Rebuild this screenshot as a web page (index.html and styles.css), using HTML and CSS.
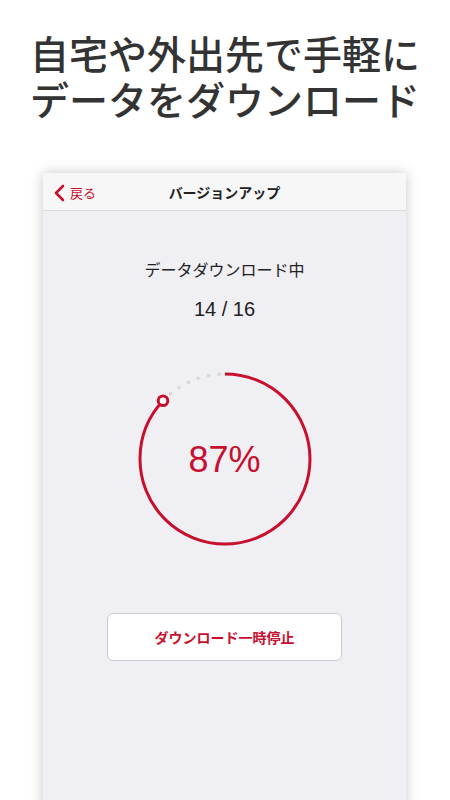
FILE: index.html
```html
<!DOCTYPE html>
<html>
  <head>
    <meta name="viewport" content="width=device-width, initial-scale=1">
    <link rel="stylesheet" href="styles.css">
  </head>
  <body>
    <h1 class="headline">自宅や外出先で手軽に<br>データをダウンロード</h1>

    <div class="phone">
      <div class="navbar">
        <a class="back">
          <svg width="13" height="18" viewBox="0 0 13 18"><polyline points="10,2 3,9 10,16" fill="none" stroke="#c8102e" stroke-width="2.6" stroke-linecap="round" stroke-linejoin="round"/></svg>
          <span>戻る</span>
        </a>
        <div class="title">バージョンアップ</div>
      </div>

      <div class="content">
        <p class="status">データダウンロード中</p>
        <p class="count">14 / 16</p>

        <div class="progress">
          <svg width="200" height="200" viewBox="0 0 200 200">
            <!-- remaining part -->
            <g fill="#d9d9dd">
              <circle cx="45.4" cy="34.9" r="1.9"/>
              <circle cx="54.0" cy="28.6" r="1.9"/>
              <circle cx="63.3" cy="23.3" r="1.9"/>
              <circle cx="73.2" cy="19.3" r="1.9"/>
              <circle cx="83.5" cy="16.6" r="1.9"/>
              <circle cx="94.1" cy="15.2" r="1.9"/>
            </g>
            <!-- 87% done -->
            <circle cx="100" cy="100" r="85" fill="none" stroke="#c8102e" stroke-width="3" stroke-dasharray="464.6 600" transform="rotate(-90 100 100)"/>
            <circle cx="38.0" cy="41.8" r="4.8" fill="#fff" stroke="#c8102e" stroke-width="3"/>
          </svg>
          <div class="percent">87%</div>
        </div>

        <button class="pause">ダウンロード一時停止</button>
      </div>
    </div>
  </body>
</html>
```

FILE: styles.css
```css
body {
  margin: 0;
  background: #fff;
  font-family: "Liberation Sans", "Noto Sans CJK JP", sans-serif;
  overflow: hidden;
}

.headline {
  margin: 0;
  padding-top: 29px;
  font-family: "Noto Sans CJK JP", sans-serif;
  font-weight: 500;
  font-size: 39px;
  line-height: 46px;
  color: #333;
  text-align: center;
}

.phone {
  margin: 52px 0 0 43px;
  width: 363px;
  height: 640px;
  background: #efeff4;
  box-shadow: 0 0 12px rgba(0, 0, 0, 0.22);
}

.navbar {
  position: relative;
  height: 37px;
  background: #f7f7f8;
  border-bottom: 1px solid #dcdce0;
  display: flex;
  align-items: center;
  justify-content: center;
}
.back {
  position: absolute;
  left: 10px;
  top: 10px;
  display: flex;
  align-items: center;
  gap: 4px;
  color: #c8102e;
  font-size: 13px;
}
.title {
  font-size: 14px;
  font-weight: bold;
  color: #222;
}

.content {
  display: flex;
  flex-direction: column;
  align-items: center;
}
.status {
  margin: 50px 0 0;
  font-size: 16px;
  line-height: 20px;
  color: #222;
}
.count {
  margin: 16px 0 0;
  font-size: 20px;
  line-height: 24px;
  color: #222;
}

.progress {
  position: relative;
  margin-top: 38px;
  width: 200px;
  height: 200px;
}
.progress svg { display: block; }
.percent {
  position: absolute;
  left: 0;
  right: 0;
  top: 79px;
  text-align: center;
  font-size: 36px;
  line-height: 44px;
  color: #c8102e;
}

.pause {
  margin-top: 54px;
  width: 235px;
  height: 48px;
  background: #fff;
  border: 1.5px solid #c9c9ce;
  border-radius: 6px;
  color: #c8102e;
  font-family: "Noto Sans CJK JP", sans-serif;
  font-weight: bold;
  font-size: 14px;
}
```
